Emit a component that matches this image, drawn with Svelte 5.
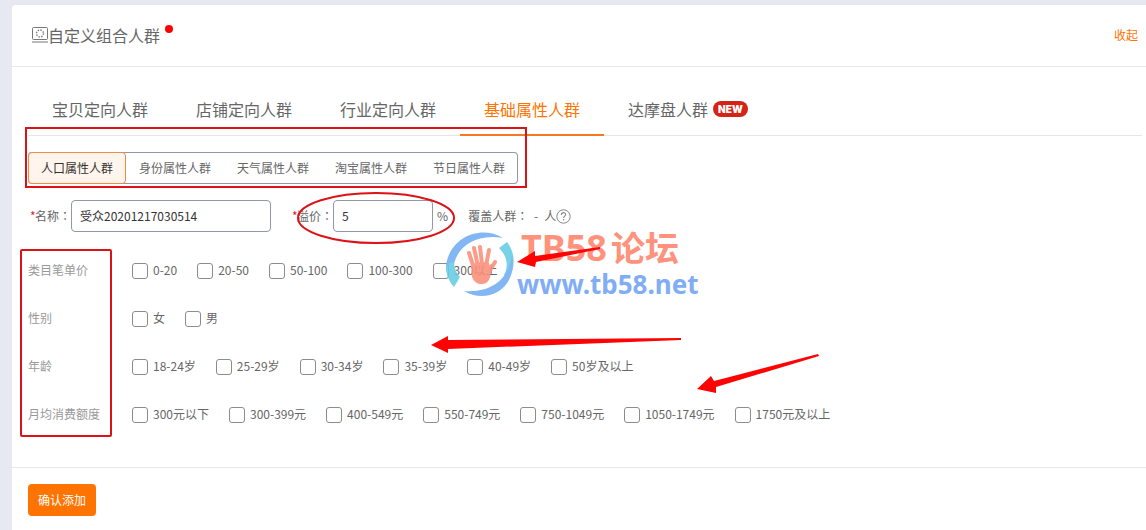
<script>
  const tabs = ['宝贝定向人群', '店铺定向人群', '行业定向人群', '基础属性人群', '达摩盘人群'];
  const kinds = ['人口属性人群', '身份属性人群', '天气属性人群', '淘宝属性人群', '节日属性人群'];
  const groups = [
    { label: '类目笔单价', options: ['0-20', '20-50', '50-100', '100-300', '300以上'] },
    { label: '性别', options: ['女', '男'] },
    { label: '年龄', options: ['18-24岁', '25-29岁', '30-34岁', '35-39岁', '40-49岁', '50岁及以上'] },
    {
      label: '月均消费额度',
      options: ['300元以下', '300-399元', '400-549元', '550-749元', '750-1049元', '1050-1749元', '1750元及以上']
    }
  ];
  let activeTab = $state(3);
  let activeKind = $state(0);
  let name = $state('受众20201217030514');
  let premium = $state('5');
</script>

<main class="page">
  <section class="card">
    <header class="head">
      <svg class="screen" width="16" height="16" viewBox="0 0 16 16" fill="none" stroke="#777" aria-hidden="true">
        <rect x="0.5" y="0.5" width="15" height="12" rx="1" />
        <path d="M0 15H16" />
        <circle cx="8" cy="6.5" r="3.5" stroke-width="1.4" stroke-dasharray="1.4 1.35" />
      </svg>
      <h1>自定义组合人群</h1>
      <span class="dot"></span>
      <a class="collapse" href="#collapse">收起</a>
    </header>

    <div class="body">
      <nav class="tabs">
        {#each tabs as tab, i}
          <button type="button" class="tab" class:active={activeTab === i} onclick={() => (activeTab = i)}>
            {tab}{#if i === 4}<span class="new">NEW</span>{/if}
          </button>
        {/each}
      </nav>

      <div class="kinds">
        {#each kinds as kind, i}
          <button type="button" class="kind" class:active={activeKind === i} onclick={() => (activeKind = i)}>{kind}</button>
        {/each}
      </div>

      <div class="fields">
        <label for="name"><span class="star">*</span>名称<span class="colon">：</span></label>
        <input id="name" class="text wide" bind:value={name} />
        <label class="second" for="premium"><span class="star">*</span>溢价<span class="colon">：</span></label>
        <input id="premium" class="text" bind:value={premium} />
        <span class="unit">%</span>
        <span class="cover">覆盖人群<span class="colon">：</span><span class="count">-</span>人</span>
        <svg width="15" height="15" viewBox="0 0 15 15" fill="none" stroke="#888" aria-hidden="true">
          <circle cx="7.5" cy="7.5" r="6.7" />
          <path d="M5.4 5.9c0-3 4.3-2.9 4.3-.4 0 1.6-2.1 1.6-2.1 3.4M7.6 10v1.4" stroke-width="1.1" />
        </svg>
      </div>

      {#each groups as group}
        <div class="group" role="group" aria-label={group.label}>
          <span class="title">{group.label}</span>
          <div class="options">
            {#each group.options as option}
              <label class="option"><input type="checkbox" /><span>{option}</span></label>
            {/each}
          </div>
        </div>
      {/each}
    </div>

    <footer class="foot">
      <button type="button" class="confirm">确认添加</button>
    </footer>
  </section>

  <svg class="marks" width="830" height="450" viewBox="0 0 830 450" aria-hidden="true">
    <g opacity="0.88">
      <path d="M503 238C480 224 449 238 446 266C446 271 447 276 449 279L454 275C450 256 468 232 503 238Z" fill="#72aef3" />
      <path d="M447 264L454 262C454 268 456 273 460 277L454 287C448 281 446 272 447 264Z" fill="#65cce4" />
      <path d="M499 248L507 242C515 252 516 267 509 278L504 275C509 265 507 256 499 248Z" fill="#65cce4" />
      <path d="M464 291C479 300 500 297 509 280C513 272 514 263 512 255C509 277 494 293 464 291Z" fill="#72aef3" />
      <g stroke="#fb8f7a" stroke-width="4" stroke-linecap="round" fill="none">
        <path d="M474 268L469 253M478 266L474 248M482 264L480 247M486 266L489 250M489 272L495 262" />
      </g>
      <path d="M471 265Q479 260 489 263L491 270C491 277 489 283 483 284Q475 285 472 277Z" fill="#fb8f7a" />
    </g>
    <g font-weight="700" opacity="0.85">
      <text x="521" y="261" fill="#ff8066" font-family="Noto Sans, sans-serif" font-size="36">TB58</text>
      <text x="611" y="261" fill="#ff8066" font-family="Noto Sans CJK SC, sans-serif" font-size="34">论坛</text>
      <text x="517" y="294" fill="#6a9ff5" font-family="Noto Sans, sans-serif" font-size="26">www.tb58.net</text>
    </g>
    <g fill="none" stroke="#dc1216" stroke-width="2">
      <rect x="26" y="128" width="500" height="59" />
      <rect x="21" y="250" width="90" height="186" rx="1" />
      <ellipse cx="376" cy="218" rx="78" ry="25" />
    </g>
    <g fill="#fd0303">
      <path d="M517 262L535 251L535 256L600 247L600 249L536 262L535 267Z" />
      <path d="M431 345L448 336L448 340L681 338L681 340L448 349L448 353Z" />
      <path d="M697 389L711 376L714 381L818 354L819 356L716 387L716 393Z" />
    </g>
  </svg>
</main>

<style>
  :global(body) {
    margin: 0;
    background: #e6e9f2;
  }
  .page {
    position: relative;
    padding: 5px 0 0 12px;
    color: #666;
    font: 12px/16px 'Noto Sans CJK SC', sans-serif;
  }
  button,
  input {
    font: inherit;
    color: inherit;
    margin: 0;
    box-sizing: border-box;
  }
  button {
    cursor: pointer;
  }
  .card {
    background: #fff;
    border-radius: 4px 0 0 0;
    min-height: calc(100vh - 5px);
  }
  .head {
    display: flex;
    align-items: center;
    box-sizing: border-box;
    height: 62px;
    padding: 0 8px 2px 20px;
    border-bottom: 1px solid #e6e8eb;
  }
  h1 {
    margin: 0;
    font-size: 16px;
    font-weight: 400;
    line-height: 24px;
  }
  .dot {
    width: 8px;
    height: 8px;
    margin: 0 0 12px 5px;
    border-radius: 50%;
    background: #f00;
  }
  .collapse {
    margin-left: auto;
    color: #ff7300;
    text-decoration: none;
  }
  .body {
    padding: 17px 4px 29px 16px;
  }
  .tabs {
    display: flex;
    border-bottom: 1px solid #e6e6e6;
  }
  .tab {
    display: flex;
    align-items: center;
    height: 52px;
    margin-bottom: -1px;
    padding: 0 24px;
    border: 0;
    border-bottom: 2px solid transparent;
    background: none;
    font-size: 16px;
  }
  .tab.active {
    color: #ff7300;
    border-color: #f47a20;
  }
  .new {
    margin-left: 5px;
    padding: 0 5px;
    border-radius: 8px;
    background: #d42418;
    color: #fff;
    font: 900 10px/16px Inter, sans-serif;
  }
  .kinds {
    display: inline-flex;
    margin-top: 16px;
    border-radius: 4px;
    box-shadow: inset 0 0 0 1px #9299a5;
  }
  .kind {
    height: 32px;
    padding: 0 12px;
    border: 1px solid transparent;
    background: none;
  }
  .kind.active {
    border-color: #f08a45;
    border-radius: 4px;
    background: #fff5ed;
    color: #333;
  }
  .fields {
    display: flex;
    align-items: center;
    margin: 16px 0 14px;
    padding-left: 2px;
  }
  .star {
    display: inline-block;
    width: 5px;
    color: #e21b1b;
  }
  .colon {
    font-family: 'Noto Sans CJK TC', sans-serif;
  }
  .text {
    width: 100px;
    height: 32px;
    padding: 0 8px 1px;
    border: 1px solid #9299a5;
    border-radius: 4px;
    background: #fff;
    color: #333;
  }
  .wide {
    width: 200px;
  }
  .second {
    margin-left: 21px;
  }
  .unit {
    margin-left: 4px;
  }
  .cover {
    margin-left: 20px;
  }
  .count {
    display: inline-block;
    width: 16px;
    text-align: center;
  }
  .group {
    display: flex;
    align-items: center;
    height: 48px;
  }
  .title {
    width: 104px;
    color: #999;
  }
  .options {
    display: flex;
    gap: 20px;
  }
  .option {
    display: flex;
    align-items: center;
    gap: 5px;
  }
  .option input {
    appearance: none;
    width: 16px;
    height: 16px;
    margin-top: 2px;
    border: 1px solid #8c8c8c;
    border-radius: 3px;
    background: #fff;
  }
  .option input:checked {
    background: #ff7300;
  }
  .foot {
    padding: 16px;
    border-top: 1px solid #e6e8eb;
  }
  .confirm {
    height: 32px;
    padding: 0 10px;
    border: 0;
    border-radius: 4px;
    background: #ff7300;
    color: #fff;
  }
  .marks {
    position: absolute;
    top: 0;
    left: 0;
    pointer-events: none;
  }
</style>
